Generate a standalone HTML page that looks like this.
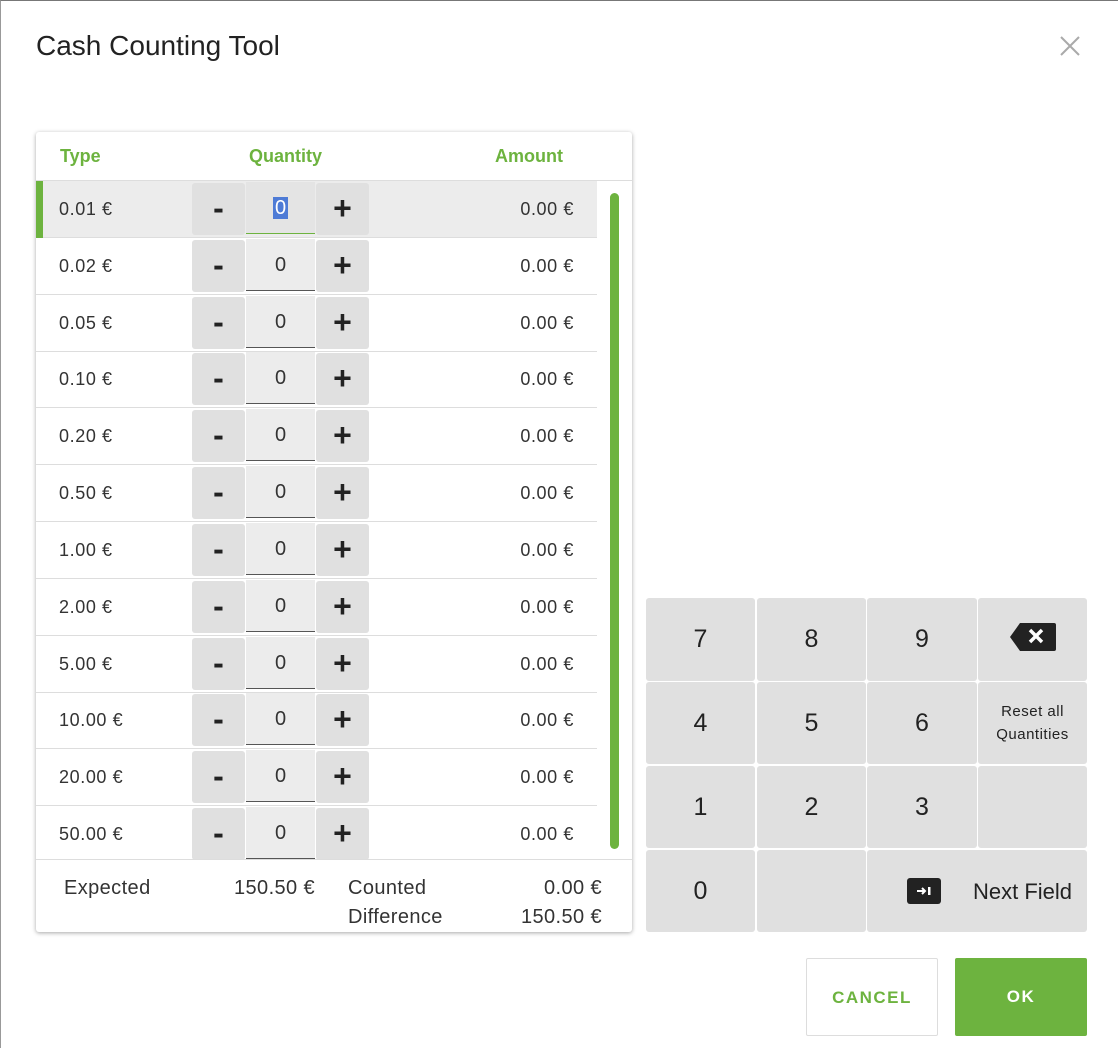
<!DOCTYPE html>
<html><head><meta charset="utf-8"><style>
*{box-sizing:border-box;margin:0;padding:0}
body{width:1118px;height:1048px;background:#fff;font-family:"Liberation Sans",sans-serif;position:relative;overflow:hidden;color:#333}
.frame{position:absolute;left:0;top:0;width:1118px;height:1048px;border-top:1px solid #777;border-left:1px solid #999}
.title{position:absolute;left:36px;top:30px;font-size:28px;color:#222}
.close{position:absolute;left:1059px;top:35px}
.card{position:absolute;left:36px;top:132px;width:596px;height:800px;background:#fff;border-radius:3px;box-shadow:0 1px 4px rgba(0,0,0,.35)}
.hd{position:absolute;top:146px;font-size:18px;font-weight:bold;color:#6db33f}
.row{position:absolute;left:36px;width:561px;height:57px;border-bottom:1px solid #ddd}
.row.sel{background:#ececec}
.row.sel::before{content:"";position:absolute;left:0;top:0;width:7px;height:57px;background:#6db33f}
.t{position:absolute;left:23px;top:18px;font-size:18px;letter-spacing:.6px;color:#333}
.a{position:absolute;right:23px;top:18px;font-size:18px;letter-spacing:.6px;color:#333}
.b{position:absolute;top:2px;width:53px;height:52px;background:#e0e0e0;border-radius:3px;font-size:32px;font-weight:bold;color:#222;text-align:center;line-height:50px}
.m{left:156px}.p{left:280px}
.in{position:absolute;left:210px;top:1px;width:69px;height:52px;background:#ececec;border-bottom:1px solid #555;text-align:center;font-size:20px;line-height:52px;color:#333}
.sel .in{background:#e4e4e4;border-bottom:1px solid #6db33f}
.hl{background:#4e7bd6;color:#fff;padding:0 2px}
.sb{position:absolute;left:610px;top:193px;width:9px;height:656px;background:#6db33f;border-radius:5px}
.ft{position:absolute;font-size:20px;letter-spacing:.4px;color:#333}
.k{position:absolute;background:#e0e0e0;border-radius:3px;text-align:center;font-size:25px;color:#222;line-height:82px}
.btn{position:absolute;top:958px;height:78px;font-size:17px;font-weight:bold;letter-spacing:1.5px;text-align:center;line-height:78px;border-radius:2px}
</style></head><body>
<div class="frame"></div>
<div class="title">Cash Counting Tool</div>
<svg class="close" width="22" height="22" viewBox="0 0 22 22"><path d="M2 2L20 20M20 2L2 20" stroke="#aaa" stroke-width="2"/></svg>
<div class="card"></div>
<div style="position:absolute;left:36px;top:180px;width:596px;border-top:1px solid #ddd"></div>
<div class="hd" style="left:60px">Type</div>
<div class="hd" style="left:249px">Quantity</div>
<div class="hd" style="left:495px">Amount</div>

<div class="row sel" style="top:181px"><div class="t">0.01 €</div><div class="b m">-</div><div class="in"><span class="hl">0</span></div><div class="b p">+</div><div class="a">0.00 €</div></div>
<div class="row" style="top:238px"><div class="t">0.02 €</div><div class="b m">-</div><div class="in">0</div><div class="b p">+</div><div class="a">0.00 €</div></div>
<div class="row" style="top:295px"><div class="t">0.05 €</div><div class="b m">-</div><div class="in">0</div><div class="b p">+</div><div class="a">0.00 €</div></div>
<div class="row" style="top:351px"><div class="t">0.10 €</div><div class="b m">-</div><div class="in">0</div><div class="b p">+</div><div class="a">0.00 €</div></div>
<div class="row" style="top:408px"><div class="t">0.20 €</div><div class="b m">-</div><div class="in">0</div><div class="b p">+</div><div class="a">0.00 €</div></div>
<div class="row" style="top:465px"><div class="t">0.50 €</div><div class="b m">-</div><div class="in">0</div><div class="b p">+</div><div class="a">0.00 €</div></div>
<div class="row" style="top:522px"><div class="t">1.00 €</div><div class="b m">-</div><div class="in">0</div><div class="b p">+</div><div class="a">0.00 €</div></div>
<div class="row" style="top:579px"><div class="t">2.00 €</div><div class="b m">-</div><div class="in">0</div><div class="b p">+</div><div class="a">0.00 €</div></div>
<div class="row" style="top:636px"><div class="t">5.00 €</div><div class="b m">-</div><div class="in">0</div><div class="b p">+</div><div class="a">0.00 €</div></div>
<div class="row" style="top:692px"><div class="t">10.00 €</div><div class="b m">-</div><div class="in">0</div><div class="b p">+</div><div class="a">0.00 €</div></div>
<div class="row" style="top:749px"><div class="t">20.00 €</div><div class="b m">-</div><div class="in">0</div><div class="b p">+</div><div class="a">0.00 €</div></div>
<div class="row" style="top:806px;height:54px"><div class="t">50.00 €</div><div class="b m">-</div><div class="in">0</div><div class="b p">+</div><div class="a">0.00 €</div></div>
<div style="position:absolute;left:36px;top:859px;width:596px;border-top:1px solid #ddd"></div>
<div class="sb"></div>

<div class="ft" style="left:64px;top:877px">Expected</div>
<div class="ft" style="left:234px;top:877px">150.50 €</div>
<div class="ft" style="left:348px;top:877px">Counted</div>
<div class="ft" style="right:516px;top:877px">0.00 €</div>
<div class="ft" style="left:348px;top:906px">Difference</div>
<div class="ft" style="right:516px;top:906px">150.50 €</div>

<div class="k" style="left:646px;top:598px;width:109px;height:83px">7</div>
<div class="k" style="left:757px;top:598px;width:109px;height:83px">8</div>
<div class="k" style="left:867px;top:598px;width:110px;height:83px">9</div>
<div class="k" style="left:978px;top:598px;width:109px;height:83px"><svg width="46" height="32" viewBox="0 0 46 32" style="vertical-align:middle;margin-top:-6px"><path d="M10 2H44a2 2 0 0 1 2 2V28a2 2 0 0 1-2 2H10L0 16Z" fill="#222"/><path d="M20 9L32 21M32 9L20 21" stroke="#fff" stroke-width="3.5"/></svg></div>
<div class="k" style="left:646px;top:682px;width:109px;height:82px">4</div>
<div class="k" style="left:757px;top:682px;width:109px;height:82px">5</div>
<div class="k" style="left:867px;top:682px;width:110px;height:82px">6</div>
<div class="k" style="left:978px;top:682px;width:109px;height:82px;font-size:15px;line-height:23px;padding-top:18px;letter-spacing:.5px">Reset all<br>Quantities</div>
<div class="k" style="left:646px;top:766px;width:109px;height:82px">1</div>
<div class="k" style="left:757px;top:766px;width:109px;height:82px">2</div>
<div class="k" style="left:867px;top:766px;width:110px;height:82px">3</div>
<div class="k" style="left:978px;top:766px;width:109px;height:82px"></div>
<div class="k" style="left:646px;top:850px;width:109px;height:82px">0</div>
<div class="k" style="left:757px;top:850px;width:109px;height:82px"></div>
<div class="k" style="left:867px;top:850px;width:220px;height:82px"></div>
<svg style="position:absolute;left:907px;top:878px" width="34" height="26" viewBox="0 0 34 26"><rect width="34" height="26" rx="3" fill="#222"/><path d="M10 13H18M15 10L18 13L15 16" stroke="#fff" stroke-width="2" fill="none"/><rect x="21" y="9" width="2.5" height="8" fill="#fff"/></svg>
<div style="position:absolute;left:973px;top:879px;font-size:22px;color:#222">Next Field</div>

<div class="btn" style="left:806px;width:132px;border:1px solid #ddd;color:#6db33f;background:#fff">CANCEL</div>
<div class="btn" style="left:955px;width:132px;background:#6db33f;color:#fff">OK</div>
</body></html>
